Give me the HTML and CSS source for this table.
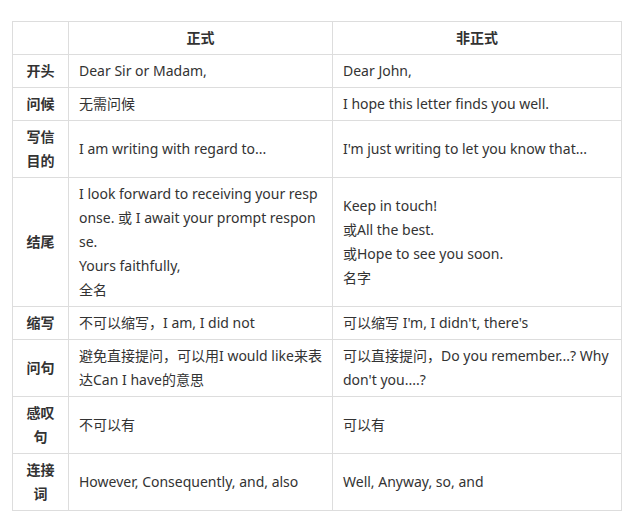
FILE: index.html
```html
<!DOCTYPE html>
<html lang="zh-CN">
<head>
<meta charset="utf-8">
<title>正式与非正式书信对比</title>
<link rel="stylesheet" href="styles.css">
</head>
<body>
<div class="page">
  <table class="compare">
    <colgroup>
      <col class="c-label">
      <col class="c-formal">
      <col class="c-informal">
    </colgroup>
    <thead>
      <tr>
        <th class="label"></th>
        <th>正式</th>
        <th>非正式</th>
      </tr>
    </thead>
    <tbody>
      <tr>
        <th class="label">开头</th>
        <td>Dear Sir or Madam,</td>
        <td>Dear John,</td>
      </tr>
      <tr>
        <th class="label">问候</th>
        <td>无需问候</td>
        <td>I hope this letter finds you well.</td>
      </tr>
      <tr>
        <th class="label">写信目的</th>
        <td>I am writing with regard to...</td>
        <td>I'm just writing to let you know that...</td>
      </tr>
      <tr>
        <th class="label">结尾</th>
        <td><span class="breakall">I look forward to receiving your response. 或 I await your prompt response.</span><br>Yours faithfully,<br>全名</td>
        <td>Keep in touch!<br>或All the best.<br>或Hope to see you soon.<br>名字</td>
      </tr>
      <tr>
        <th class="label">缩写</th>
        <td>不可以缩写，I am, I did not</td>
        <td>可以缩写 I'm, I didn't, there's</td>
      </tr>
      <tr>
        <th class="label">问句</th>
        <td>避免直接提问，可以用I would like来表达Can I have的意思</td>
        <td>可以直接提问，Do you remember...? Why don't you....?</td>
      </tr>
      <tr>
        <th class="label">感叹句</th>
        <td>不可以有</td>
        <td>可以有</td>
      </tr>
      <tr>
        <th class="label">连接词</th>
        <td>However, Consequently, and, also</td>
        <td>Well, Anyway, so, and</td>
      </tr>
    </tbody>
  </table>
</div>
</body>
</html>
```
FILE: styles.css
```css
html, body {
  margin: 0;
  padding: 0;
  background: #ffffff;
}

.page {
  padding: 21px 0 0 12px;
}

.compare {
  border-collapse: collapse;
  table-layout: fixed;
  width: 609px;
  font-family: "Noto Sans", "Noto Sans CJK SC", sans-serif;
  font-size: 14px;
  line-height: 24px;
  color: #333333;
}

.c-label { width: 56px; }
.c-formal { width: 264px; }
.c-informal { width: 289px; }

.compare th,
.compare td {
  border: 1px solid #dddddd;
  padding: 4px 10px;
  vertical-align: middle;
  text-align: left;
  font-weight: normal;
}

.compare thead th {
  text-align: center;
  font-weight: bold;
}

.compare th.label {
  text-align: center;
  font-weight: bold;
}

.breakall {
  word-break: break-all;
}
```
